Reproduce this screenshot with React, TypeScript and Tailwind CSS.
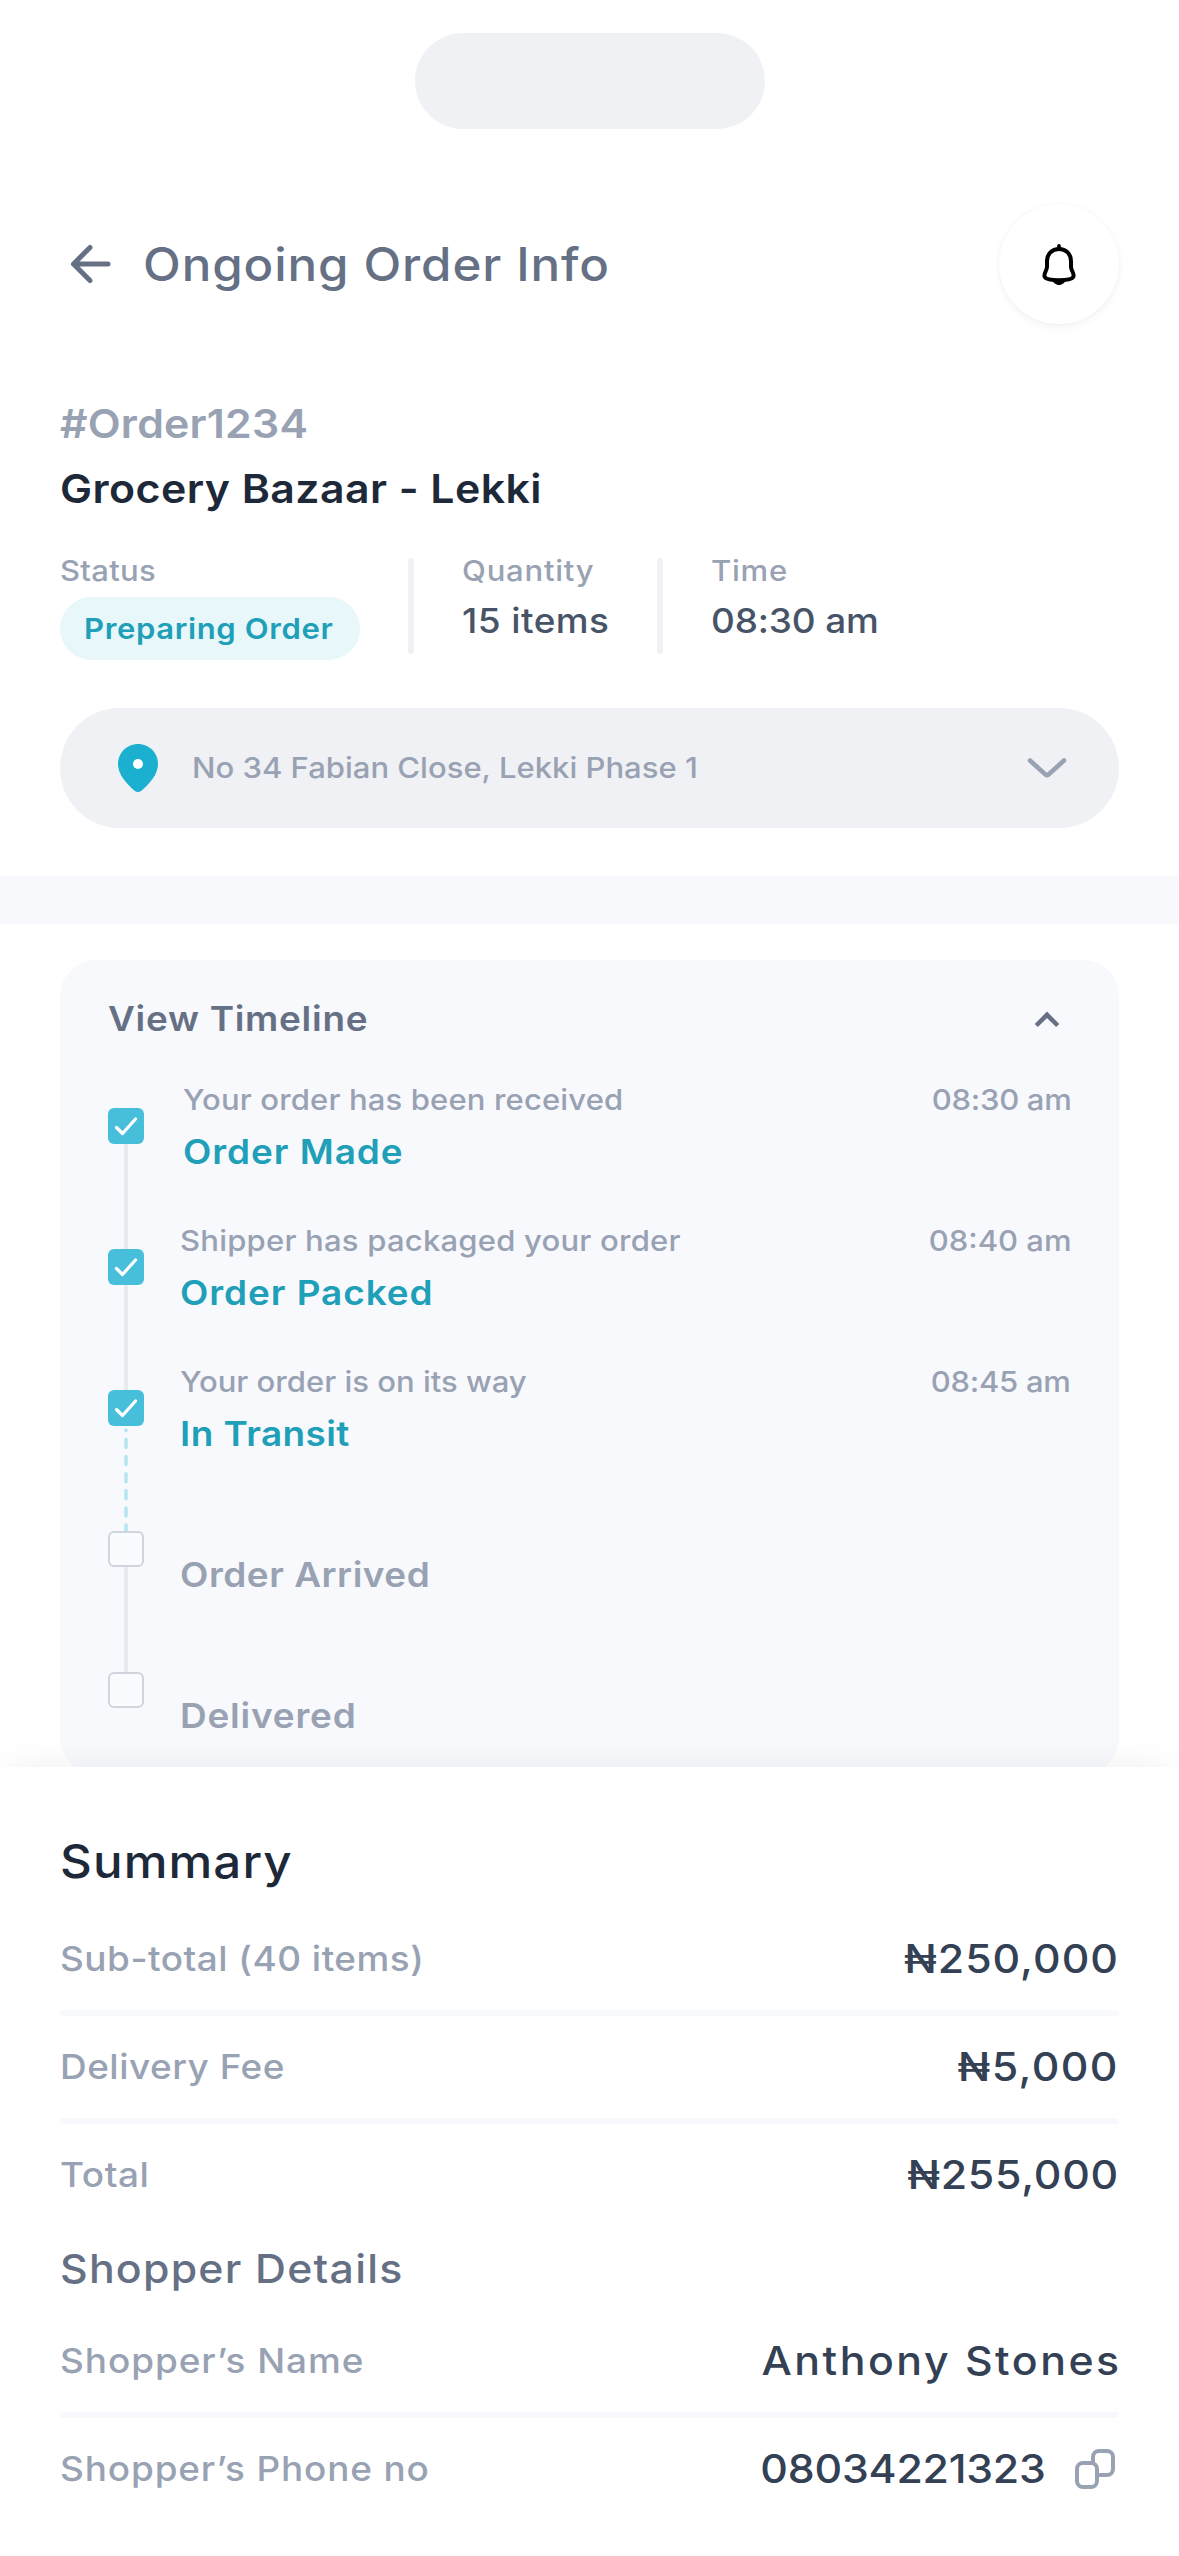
import React from "react";

const steps = [
  { note: "Your order has been received", title: "Order Made", time: "08:30 am", done: true, line: "solid", indent: "pl-[3px]", noteGap: "tracking-[0.13px]", titleGap: "tracking-[0.88px]", timeGap: "tracking-[-0.27px]" },
  { note: "Shipper has packaged your order", title: "Order Packed", time: "08:40 am", done: true, line: "solid", indent: "", noteGap: "tracking-[0.2px]", titleGap: "tracking-[0.88px]", timeGap: "" },
  { note: "Your order is on its way", title: "In Transit", time: "08:45 am", done: true, line: "dashed", indent: "", noteGap: "", titleGap: "tracking-[0.41px]", timeGap: "tracking-[-0.27px]" },
  { note: "", title: "Order Arrived", time: "", done: false, line: "solid", indent: "", noteGap: "", titleGap: "tracking-[0.49px]", timeGap: "" },
  { note: "", title: "Delivered", time: "", done: false, line: "", indent: "", noteGap: "", titleGap: "tracking-[0.75px]", timeGap: "" },
];

const BellIcon = () => (
  <svg width="48" height="48" viewBox="0 0 48 48" fill="none">
    <path
      d="M24 9C17 9 12 14 12 21v5.500C12 31 9.400 31.800 9.400 35.800C9.400 39.200 15 40.200 24 40.200S38.600 39.200 38.600 35.800C38.600 31.800 36 31 36 26.500V21C36 14 31 9 24 9Z"
      stroke="black"
      strokeWidth="4"
    />
    <path d="M24 5.800v3" stroke="black" strokeWidth="3.600" strokeLinecap="round" />
    <path d="M17 40h14c-1 2.500-4 5-7 5s-6-2.500-7-5Z" fill="black" />
  </svg>
);

const PinIcon = () => (
  <svg width="48" height="48" viewBox="0 0 48 48">
    <path
      d="M24 0C12.800 0 4 8.900 4 20c0 10.500 8.300 19.500 16.600 26.700c2 1.700 4.800 1.700 6.800 0C35.700 39.500 44 30.500 44 20C44 8.900 35.200 0 24 0Z"
      fill="#1BAFD0"
    />
    <circle cx="24" cy="20" r="5" fill="white" />
  </svg>
);

const CopyIcon = () => (
  <svg width="48" height="48" viewBox="0 0 48 48" fill="none" stroke="#98A2B3" strokeWidth="4">
    <rect x="6" y="18" width="20" height="24" rx="6" />
    <path d="M22 18v-6a6 6 0 0 1 6-6h8a6 6 0 0 1 6 6v12a6 6 0 0 1-6 6H26" />
  </svg>
);

const Check = ({ done }: { done: boolean }) =>
  done ? (
    <div className="w-9 h-9 shrink-0 rounded-[6px] bg-[#48BFDA]">
      <svg width="36" height="36" viewBox="0 0 36 36" fill="none">
        <path d="M8.500 19.500l6 6L27.500 11" stroke="white" strokeWidth="3.200" strokeLinecap="round" strokeLinejoin="round" />
      </svg>
    </div>
  ) : (
    <div className="w-9 h-9 shrink-0 rounded-[6px] border-2 border-[#D0D5DD] bg-[#FAFBFE]" />
  );

const Connector = ({ line }: { line: string }) => {
  if (line === "solid") return <div className="w-1 flex-1 bg-[#E7EAEF]" />;
  if (line === "dashed")
    return (
      <svg width="4" height="105" viewBox="0 0 4 105" stroke="#B5E5F0" strokeWidth="3.500" strokeLinecap="round">
        <path d="M2 4v0.500" />
        <path d="M2 13.500V105" strokeDasharray="8 9.100" />
      </svg>
    );
  return null;
};

const Row = ({ label, labelGap, children, last }: any) => (
  <div>
    <div className="flex items-center justify-between h-[102px]">
      <p className={`origin-left scale-x-[1.07] text-[34.5px] font-medium text-[#98A2B3] ${labelGap}`}>{label}</p>
      {children}
    </div>
    {!last && <div className="h-[6px] rounded-full bg-[#F7F9FC]" />}
  </div>
);

export default function App() {
  return (
    <div className="w-[1179px] h-[2556px] overflow-hidden bg-white whitespace-nowrap font-['Inter','Noto_Sans',sans-serif]">
      <div className="w-[350px] h-24 mt-[33px] mx-auto rounded-full bg-[#F0F1F5]" />

      <div className="px-[60px]">
        <div className="flex items-center justify-between mt-[75px]">
          <div className="flex items-center gap-[23px]">
            <svg width="60" height="60" viewBox="0 0 60 60" fill="none" stroke="#667085" strokeWidth="5" strokeLinecap="round" strokeLinejoin="round">
              <path d="M48 30H13.500M30 13.500L13.500 30L30 46.500" />
            </svg>
            <h1 className="origin-left scale-x-[1.07] text-[46px] leading-[60px] font-medium tracking-[0.85px] text-[#667085]">
              Ongoing Order Info
            </h1>
          </div>
          <div className="flex items-center justify-center w-[120px] h-[120px] rounded-full bg-white shadow-[0_4px_8px_rgba(16,24,40,0.04),0_0_4px_rgba(16,24,40,0.04)]">
            <BellIcon />
          </div>
        </div>

        <p className="origin-left scale-x-[1.07] mt-[75px] text-[40px] leading-[50px] font-semibold tracking-[0.2px] text-[#98A2B3]">#Order1234</p>
        <h2 className="origin-left scale-x-[1.07] mt-[15px] text-[40px] leading-[50px] font-semibold tracking-[0.42px] text-[#1D2939]">
          Grocery Bazaar - Lekki
        </h2>

        <div className="flex h-[107px] mt-[39px]">
          <div className="w-[300px]">
            <p className="origin-left scale-x-[1.07] text-[29px] leading-9 font-medium tracking-[0.27px] text-[#98A2B3]">Status</p>
            <div className="flex items-center h-[63px] mt-2 pl-6 rounded-full bg-[#E8F7FA]">
              <p className="origin-left scale-x-[1.07] text-[29px] leading-9 font-semibold tracking-[0.59px] text-[#209FB8]">Preparing Order</p>
            </div>
          </div>
          <div className="w-[6px] h-24 mt-[5px] mx-12 rounded-full bg-[#F0F1F5]" />
          <div className="w-[147px]">
            <p className="origin-left scale-x-[1.07] text-[29px] leading-9 font-medium tracking-[0.73px] text-[#98A2B3]">Quantity</p>
            <p className="origin-left scale-x-[1.07] mt-[10px] text-[34.5px] leading-[44px] font-medium tracking-[0.4px] text-[#475467]">15 items</p>
          </div>
          <div className="w-[6px] h-24 mt-[5px] mx-12 rounded-full bg-[#F0F1F5]" />
          <div>
            <p className="origin-left scale-x-[1.07] text-[29px] leading-9 font-medium tracking-[0.72px] text-[#98A2B3]">Time</p>
            <p className="origin-left scale-x-[1.07] mt-[10px] text-[34.5px] leading-[44px] font-medium tracking-[-0.13px] text-[#475467]">08:30 am</p>
          </div>
        </div>

        <div className="flex items-center h-[120px] mt-12 pl-[54px] pr-12 rounded-full bg-[#F0F1F5]">
          <PinIcon />
          <p className="origin-left scale-x-[1.07] flex-1 ml-[30px] text-[29px] leading-9 font-medium text-[#98A2B3]">
            No 34 Fabian Close, Lekki Phase 1
          </p>
          <svg width="48" height="48" viewBox="0 0 48 48" fill="none" stroke="#98A2B3" strokeWidth="4.500" strokeLinecap="round" strokeLinejoin="round">
            <path d="M7 16.500l15.500 14q1.500 1.400 3 0L41 16.500" />
          </svg>
        </div>
      </div>

      <div className="h-12 mt-12 bg-[#F8F9FD]" />

      <div className="h-[814px] mt-9 mx-[60px] px-12 pt-[35px] rounded-[36px] bg-[#F8F9FD]">
        <div className="flex items-center justify-between h-12 mb-[39px]">
          <h3 className="origin-left scale-x-[1.07] text-[34.5px] leading-[48px] font-semibold tracking-[0.67px] text-[#667085]">View Timeline</h3>
          <svg width="48" height="48" viewBox="0 0 48 48" fill="none" stroke="#667085" strokeWidth="4.500">
            <path d="M13.300 30.500L24 19.800L34.700 30.500" />
          </svg>
        </div>
        {steps.map((s) => (
          <div key={s.title} className="flex h-[141px]">
            <div className="flex flex-col items-center w-9 h-[141px] mt-[26px] mr-9">
              <Check done={s.done} />
              <Connector line={s.line} />
            </div>
            <div className={`flex-1 ${s.indent}`}>
              <p className={`origin-left scale-x-[1.07] h-9 text-[29px] leading-9 font-medium text-[#98A2B3] ${s.noteGap}`}>{s.note}</p>
              <p className={`origin-left scale-x-[1.07] mt-[13px] text-[34.5px] leading-[41px] font-semibold ${s.done ? "text-[#209FB8]" : "text-[#98A2B3]"} ${s.titleGap}`}>
                {s.title}
              </p>
            </div>
            <p className={`origin-right scale-x-[1.07] text-[29px] leading-9 font-medium text-[#98A2B3] ${s.timeGap}`}>{s.time}</p>
          </div>
        ))}
      </div>

      <div className="relative h-[789px] -mt-[7px] px-[60px] pt-16 bg-white shadow-[0_-12px_30px_-8px_rgba(16,24,40,0.05)]">
        <h3 className="origin-left scale-x-[1.07] mb-[17px] text-[46px] leading-[60px] font-medium tracking-[1.05px] text-[#1D2939]">Summary</h3>
        <Row label="Sub-total (40 items)" labelGap="tracking-[0.47px]">
          <p className="origin-right scale-x-[1.07] text-[40px] font-medium tracking-[0.96px] text-[#344054]">₦250,000</p>
        </Row>
        <Row label="Delivery Fee" labelGap="tracking-[0.48px]">
          <p className="origin-right scale-x-[1.07] text-[40px] font-medium tracking-[1.33px] text-[#344054]">₦5,000</p>
        </Row>
        <Row label="Total" labelGap="tracking-[0.54px]" last>
          <p className="origin-right scale-x-[1.07] text-[40px] font-medium tracking-[0.71px] text-[#344054]">₦255,000</p>
        </Row>

        <h3 className="origin-left scale-x-[1.07] mt-[18px] mb-4 text-[40px] leading-[50px] font-medium tracking-[1.15px] text-[#667085]">
          Shopper Details
        </h3>
        <Row label="Shopper’s Name" labelGap="tracking-[0.88px]">
          <p className="origin-right scale-x-[1.07] -mr-[3px] text-[40px] font-medium tracking-[2.35px] text-[#344054]">Anthony Stones</p>
        </Row>
        <Row label="Shopper’s Phone no" labelGap="tracking-[0.81px]" last>
          <div className="flex items-center gap-[25px]">
            <p className="origin-right scale-x-[1.07] text-[40px] font-medium tracking-[-0.2px] text-[#344054]">08034221323</p>
            <CopyIcon />
          </div>
        </Row>
      </div>
    </div>
  );
}
